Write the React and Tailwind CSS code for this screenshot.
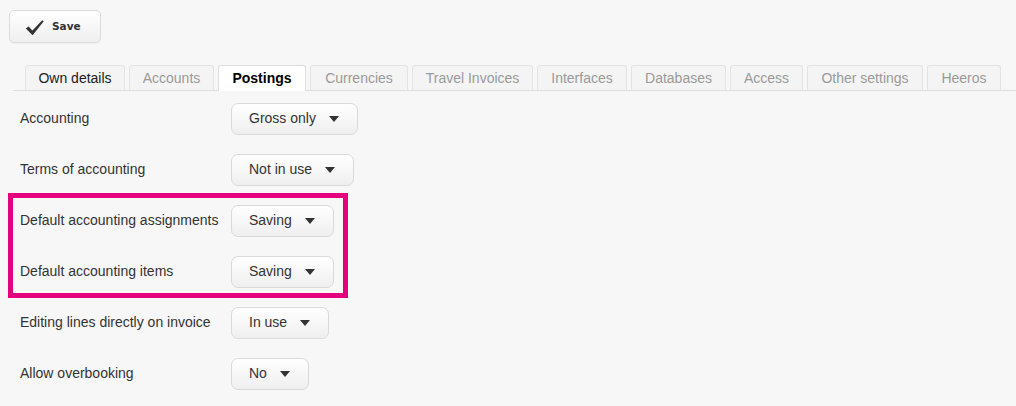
import React from "react";

const tabs = [
  { label: "Own details", w: 100, color: "text-[#222]" },
  { label: "Accounts", w: 85 },
  { label: "Postings", w: 88, active: true },
  { label: "Currencies", w: 98 },
  { label: "Travel Invoices", w: 121 },
  { label: "Interfaces", w: 90 },
  { label: "Databases", w: 95 },
  { label: "Access", w: 73 },
  { label: "Other settings", w: 116 },
  { label: "Heeros", w: 74 },
];

const rows = [
  ["Accounting", "Gross only"],
  ["Terms of accounting", "Not in use"],
  ["Default accounting assignments", "Saving"],
  ["Default accounting items", "Saving"],
  ["Editing lines directly on invoice", "In use"],
  ["Allow overbooking", "No"],
];

function Caret() {
  return (
    <svg width="10" height="6" viewBox="0 0 10 6">
      <path d="M0 0 L10 0 L5 6 Z" fill="#333" />
    </svg>
  );
}

export default function App() {
  return (
    <div className="relative w-[1016px] h-[406px] overflow-hidden bg-[#f7f7f7] font-['Liberation_Sans',Arial,sans-serif]">
      <div className="pt-[10px] pl-[9px]">
        <button className="flex items-center h-[33px] w-[92px] rounded-[5px] border border-[#dcdcdc] bg-gradient-to-b from-white to-[#efefef] pl-[15px] shadow-[0_1px_1px_rgba(0,0,0,0.04)]">
          <svg width="19" height="17" viewBox="0 0 19 17" className="mr-[8px] mt-[1px]">
            <path d="M0.8 9.6 L3.6 7.6 L7.4 11.6 L17.2 1.2 L18.6 2.6 L7.6 16.2 Z" fill="#333" />
          </svg>
          <span className="font-['DejaVu_Sans',sans-serif] font-bold text-[10.5px] text-[#333] mt-[1px]">Save</span>
        </button>
      </div>

      <div className="mt-[22px] ml-[13px] flex gap-[4px] pl-[12px] border-b border-[#dedede] h-[26px]">
        {tabs.map((t) => (
          <div
            key={t.label}
            style={{ width: t.w }}
            className={
              t.active
                ? "h-[26px] flex items-center justify-center rounded-t-[3px] border border-b-0 border-[#dedede] bg-white text-[14px] font-bold text-black"
                : "h-[25px] flex items-center justify-center rounded-t-[3px] border border-b-0 border-[#e3e3e3] bg-[#f4f4f4] text-[14px] " +
                  (t.color ? t.color : "text-[#9a9a9a]")
            }
          >
            {t.label}
          </div>
        ))}
      </div>

      <div className="pt-[2px]">
        {rows.map(([label, value], i) => (
          <div key={i} className="flex items-center h-[51px]">
            <div className="w-[231px] pl-[20px] text-[14px] text-[#333]">{label}</div>
            <div className="flex items-center h-[32px] rounded-[7px] border border-[#dadada] bg-gradient-to-b from-white to-[#efefef] pl-[17px] pr-[18px] gap-[13px] text-[14px] text-[#333]">
              <span>{value}</span>
              <Caret />
            </div>
          </div>
        ))}
      </div>

      <div className="absolute left-[8px] top-[193px] w-[340px] h-[105px] border-[5px] border-[#e5007d] pointer-events-none" />
    </div>
  );
}
